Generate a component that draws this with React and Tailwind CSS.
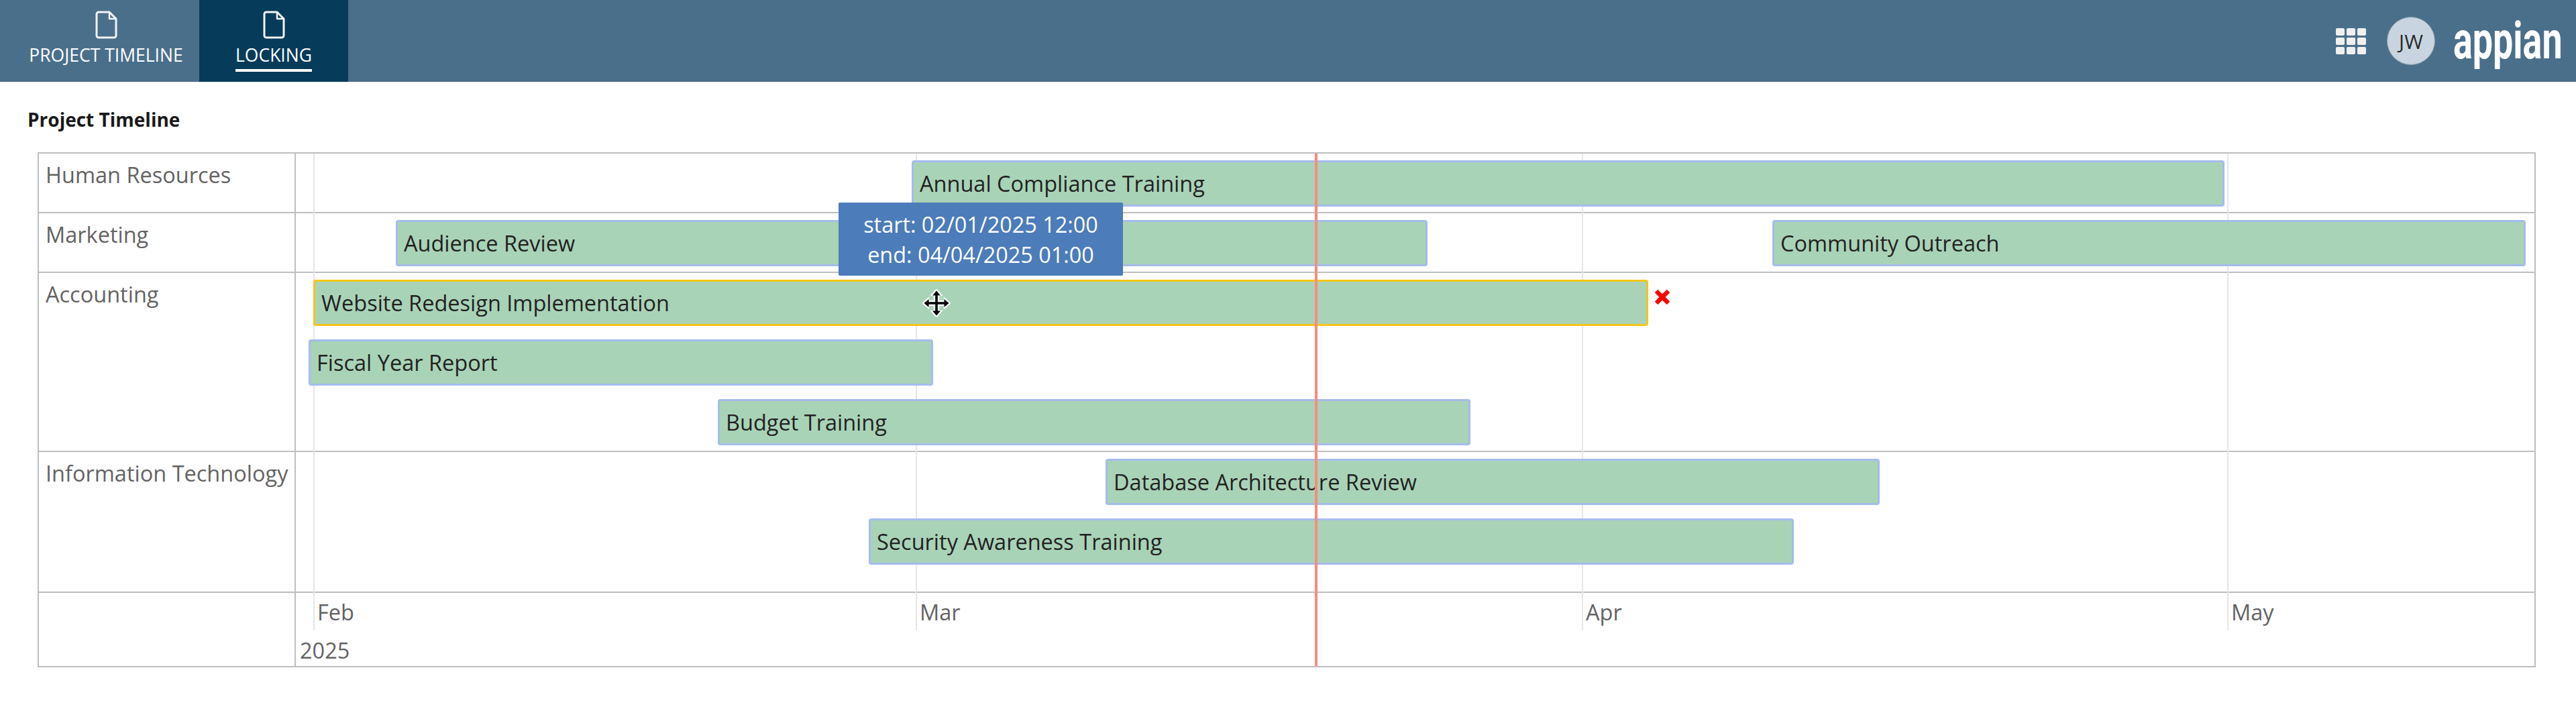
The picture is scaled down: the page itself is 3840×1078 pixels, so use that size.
import React from "react";

const DocIcon = () => (
  <svg width="33" height="42" viewBox="0 0 33 42" fill="none" stroke="#f2f4f6" strokeWidth="3" strokeLinejoin="round">
    <path d="M5 2h16l10 10v25a3 3 0 0 1-3 3H5a3 3 0 0 1-3-3V5a3 3 0 0 1 3-3z" />
    <path d="M21 2v10h10" strokeWidth="2.5" />
  </svg>
);

const Bar = ({ cls, children, selected }) => (
  <div
    className={`relative z-10 flex h-[69px] shrink-0 items-center rounded-[4px] border-[3px] bg-[#a9d3b7] pl-[9px] pt-[2px] text-[32.5px] leading-none text-[#222222] ${
      selected ? "border-[#f5c518]" : "border-[#a5bcec]"
    } ${cls}`}
  >
    <span className="whitespace-nowrap">{children}</span>
  </div>
);

const Row = ({ label, className, children }) => (
  <div className={`flex border-b-2 border-[#bebebe] ${className}`}>
    <div className="w-[383px] shrink-0 whitespace-nowrap border-r-2 border-[#bebebe] pl-[10px] pt-[9px] text-[32.5px] leading-[46px] text-[#636363]">
      {label}
    </div>
    <div className="flex flex-1 flex-col gap-[20px] pt-[10px]">{children}</div>
  </div>
);

const Tab = ({ active, label, cls }) => (
  <div className={`flex h-[122px] flex-col items-center pt-[16px] ${active ? "bg-[#073b5a]" : ""} ${cls}`}>
    <DocIcon />
    <span
      className={`mt-[7px] text-[26.5px] leading-[34px] text-white ${active ? "border-b-4 border-white pb-[4px]" : ""}`}
    >
      {label}
    </span>
  </div>
);

const MoveCursor = () => (
  <svg width="42" height="42" viewBox="0 0 42 42" className="absolute left-[1317px] top-[202px] z-30">
    <path d="M21 1l7 8h-4v9h9v-4l8 7-8 7v-4h-9v9h4l-7 8-7-8h4v-9H9v4l-8-7 8-7v4h9V9h-4z" fill="#ffffff" stroke="#ffffff" strokeWidth="2.5" />
    <path d="M21 2.5l6 7h-4.2V19.2h9.7V15l7 6-7 6v-4.2H22.8V32.5H27l-6 7-6-7h4.2V22.8H9.5V27l-7-6 7-6v4.2h9.7V9.5H15z" fill="#000000" />
  </svg>
);

export default function App() {
  return (
    <div className="min-h-[1078px] bg-white font-['Open_Sans',sans-serif]">
      <header className="flex h-[122px] items-center justify-between bg-[#4a6f8b]">
        <nav className="ml-[19px] flex">
          <Tab label="PROJECT TIMELINE" cls="w-[278px]" />
          <Tab label="LOCKING" active cls="w-[222px]" />
        </nav>
        <div className="flex items-center">
          <div className="grid grid-cols-3 gap-[3px]">
            {[0, 1, 2, 3, 4, 5, 6, 7, 8].map((i) => (
              <span key={i} className="h-[11px] w-[13px] rounded-[2px] bg-[#f0f0f0]" />
            ))}
          </div>
          <div className="ml-[31px] flex h-[72px] w-[72px] items-center justify-center rounded-full border border-[#8d9dab] bg-[#c8d5e0] text-[30px] text-[#2b2b2b]">
            JW
          </div>
          <div className="ml-[27px] mr-[23px] h-[60px] w-[160px] overflow-visible">
            <span className="block origin-top-left scale-x-[0.69] font-['Roboto',sans-serif] text-[78px] font-bold leading-[60px] text-white">
              appian
            </span>
          </div>
        </div>
      </header>

      <h1 className="ml-[41px] mt-[37px] text-[28px] font-bold leading-[38px] text-[#1a1a1a]">Project Timeline</h1>

      <div className="relative ml-[56px] mt-[30px] w-[3724px] border-2 border-[#bebebe]">
        <div className="absolute bottom-0 left-[383px] right-0 top-0">
          <span className="absolute bottom-[53px] left-[26px] top-0 w-[2px] bg-[#e6e6e6]" />
          <span className="absolute bottom-[53px] left-[924px] top-0 w-[2px] bg-[#e6e6e6]" />
          <span className="absolute bottom-[53px] left-[1917px] top-0 w-[2px] bg-[#e6e6e6]" />
          <span className="absolute bottom-[53px] left-[2879px] top-0 w-[2px] bg-[#e6e6e6]" />
          <span className="absolute bottom-0 left-[1519px] top-0 z-20 w-[4px] bg-[#fb8a7e]" />
        </div>

        <Row label="Human Resources" className="h-[89px]">
          <Bar cls="ml-[918px] w-[1957px]">Annual Compliance Training</Bar>
        </Row>
        <Row label="Marketing" className="h-[89px]">
          <div className="flex">
            <Bar cls="ml-[149px] w-[1538px]">Audience Review</Bar>
            <Bar cls="ml-[514px] w-[1123px]">Community Outreach</Bar>
          </div>
        </Row>
        <Row label="Accounting" className="h-[267px]">
          <div className="flex items-start">
            <Bar selected cls="ml-[26px] w-[1990px]">Website Redesign Implementation</Bar>
            <svg width="26" height="26" viewBox="0 0 26 26" className="z-10 ml-[8px] mt-[13px]">
              <path d="M4 4l18 18M22 4L4 22" stroke="#ff0000" strokeWidth="6.5" />
            </svg>
          </div>
          <Bar cls="ml-[19px] w-[931px]">Fiscal Year Report</Bar>
          <Bar cls="ml-[629px] w-[1122px]">Budget Training</Bar>
        </Row>
        <Row label="Information Technology" className="h-[210px]">
          <Bar cls="ml-[1207px] w-[1154px]">Database Architecture Review</Bar>
          <Bar cls="ml-[854px] w-[1379px]">Security Awareness Training</Bar>
        </Row>

        <div className="flex h-[109px]">
          <div className="w-[383px] shrink-0 border-r-2 border-[#bebebe]" />
          <div className="flex flex-col text-[32.5px] leading-[46px] text-[#636363]">
            <div className="ml-[32px] mt-[6px] flex">
              <span className="w-[898px]">Feb</span>
              <span className="w-[993px]">Mar</span>
              <span className="w-[962px]">Apr</span>
              <span>May</span>
            </div>
            <span className="ml-[6px] mt-[11px]">2025</span>
          </div>
        </div>

        <div className="absolute left-[1192px] top-[73px] z-30 flex h-[109px] w-[424px] flex-col items-center justify-center rounded-[2px] bg-[#4c7cba] text-[32.4px] leading-[45px] text-white">
          <span>start: 02/01/2025 12:00</span>
          <span>end: 04/04/2025 01:00</span>
        </div>
        <MoveCursor />
      </div>
    </div>
  );
}
